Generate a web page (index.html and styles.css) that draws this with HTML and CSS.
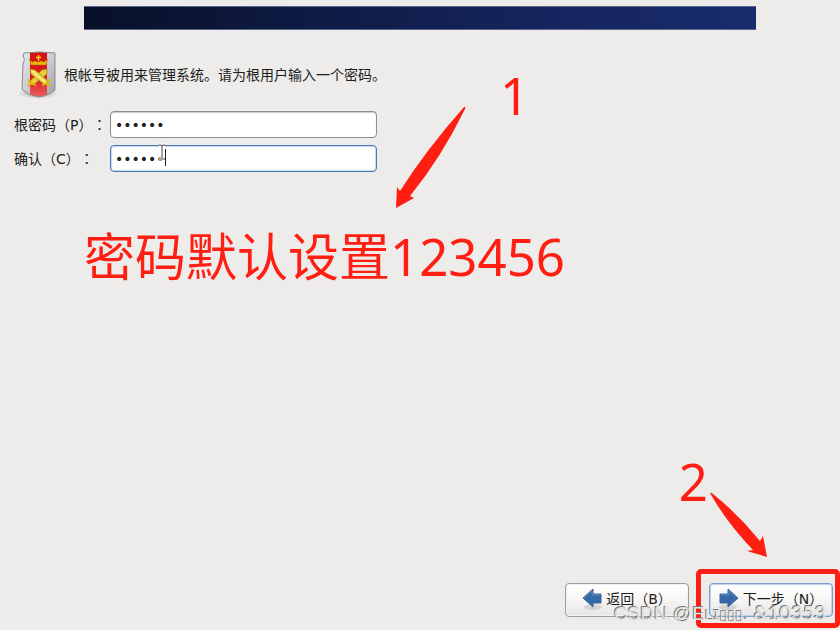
FILE: index.html
```html
<!DOCTYPE html>
<html lang="zh-CN">
<head>
<meta charset="utf-8">
<meta name="viewport" content="width=device-width, initial-scale=1">
<title>根密码</title>
<link rel="stylesheet" href="styles.css">
</head>
<body>
<div class="banner"></div>
<form class="installer">
  <main class="content">
    <header class="intro">
      <svg class="shield" viewBox="0 0 40 50" aria-hidden="true">
        <defs>
          <linearGradient id="steel" x1="0" x2="1" y1="0" y2="1">
            <stop offset="0" stop-color="#ececee"/><stop offset=".5" stop-color="#ccc9d0"/><stop offset="1" stop-color="#9a969f"/>
          </linearGradient>
          <linearGradient id="red" x1="0" x2="0" y1="0" y2="1">
            <stop offset="0" stop-color="#d40f10"/><stop offset=".55" stop-color="#e01a1c"/><stop offset="1" stop-color="#ee6a6a"/>
          </linearGradient>
          <radialGradient id="shade"><stop offset="0" stop-color="#777" stop-opacity=".7"/><stop offset="1" stop-color="#777" stop-opacity="0"/></radialGradient>
          <clipPath id="shape"><path d="M5 3Q19 1 36 3V40Q31 45 20 47Q8 45 3 39L4 14Q7 9 4 6Z"/></clipPath>
        </defs>
        <ellipse cx="19" cy="43" rx="20" ry="6" fill="url(#shade)"/>
        <g clip-path="url(#shape)">
          <path fill="url(#steel)" d="M0 0H40V50H0Z"/>
          <path fill="url(#red)" d="M11 0H28V50H11Z"/>
        </g>
        <path d="M5 3Q19 1 36 3V40Q31 45 20 47Q8 45 3 39L4 14Q7 9 4 6Z" fill="none" stroke="#8b8890"/>
        <path d="M10 9L13 12L16 11L19 12L22 11L25 12L29 9L27 15H12Z" fill="#e9b90c" stroke="#a8650a" stroke-width=".5"/>
        <path d="M19.500 5V11M17 7.500H22" stroke="#ffd91c" stroke-width="1.300"/>
        <path d="M28 19L23 20L11 31L14 35L28 24Z" fill="#e8cf35" stroke="#a97f08" stroke-width=".7"/>
        <path d="M11 19L16 20L29 31L26 35L12 24Z" fill="#f0dc4e" stroke="#a97f08" stroke-width=".7"/>
        <path d="M13 21L27 33" stroke="#fff5b8" stroke-width="1"/>
        <path d="M9 29Q11 34 17 35M31 29Q29 34 23 35M13 32L9 36M27 32L31 36" fill="none" stroke="#dfb60a" stroke-width="2"/>
      </svg>
      <p>根帐号被用来管理系统。请为根用户输入一个密码。</p>
    </header>
    <div class="fields">
      <label for="password">根密码（P）<span class="colon" lang="zh-Hant">：</span></label>
      <input id="password" type="password" value="123456">
      <label for="confirm">确认（C）<span class="colon" lang="zh-Hant">：</span></label>
      <div class="focused">
        <input id="confirm" type="password" value="123456">
        <svg class="cursor" viewBox="0 0 12 24" aria-hidden="true">
          <path d="M1 2H3L4 3L5 2H7M4 3V15M1 16H7" fill="none" stroke="#fff" stroke-width="3"/>
          <path d="M1 2H3L4 3L5 2H7M4 3V15M1 16H7" fill="none" stroke="#444"/>
          <path d="M7.500 6V23" stroke="#222"/>
        </svg>
      </div>
    </div>
    <p class="note note-password">密码默认设置123456</p>
    <p class="note note-one">1</p>
    <svg class="arrow-one" viewBox="0 0 72 106" aria-hidden="true"><path fill="#ff1e12" d="M69 2Q71 1 70 4Q46 53 15 91L19 93L1 103L2 82L5 86Q31 45 69 2Z"/></svg>
  </main>
  <footer class="actions">
    <button type="button">
      <svg class="arrow" viewBox="0 0 20 22" aria-hidden="true"><ellipse cx="11" cy="19" rx="9" ry="3" fill="#888" opacity=".25"/><path d="M1 10L11 1V6H19V15H11V19Z" fill="#3568a8" stroke="#3c659b"/><path d="M2 10L10 3V7H18" fill="none" stroke="#5f8cc4"/></svg>
      <span>返回（B）</span>
    </button>
    <div class="next">
      <button type="submit" class="primary">
        <svg class="arrow" viewBox="0 0 20 22" aria-hidden="true"><ellipse cx="9" cy="19" rx="9" ry="3" fill="#888" opacity=".25"/><path d="M19 10L9 1V6H1V15H9V19Z" fill="#3568a8" stroke="#3c659b"/><path d="M18 10L10 3V7H2" fill="none" stroke="#5f8cc4"/></svg>
        <span>下一步（N）</span>
      </button>
      <span class="frame"></span>
      <span class="note note-two">2</span>
      <svg class="arrow-two" viewBox="0 0 60 68" aria-hidden="true"><path fill="#ff1e12" d="M1 2Q2 1 4 3Q30 24 51 50L54 45L58 66L38 60L44 59Q18 32 1 2Z"/></svg>
    </div>
    <span class="watermark">CSDN @E<small>L</small>ɪ<span class="boxes">▯▯▯</span>. <span class="digits">&amp;10353</span></span>
  </footer>
</form>
</body>
</html>
```
FILE: styles.css
```css
* {
  box-sizing: border-box;
}

body {
  display: flex;
  flex-direction: column;
  min-height: 100vh;
  margin: 0;
  background: #edecea;
  color: #1c1c1c;
  font: 14px/20px "DejaVu Sans", "Noto Sans CJK SC", sans-serif;
}

p {
  margin: 0;
}

.banner {
  height: 24px;
  margin: 6px 10% 0;
  border: solid #5b668c;
  border-width: 1px 0;
  background: linear-gradient(90deg, #081027, #0e1b45 35%, #16255f 70%, #182b6c);
}

.installer {
  position: relative;
  display: flex;
  flex: 1;
  flex-direction: column;
}

.content {
  position: relative;
  flex: 1;
  padding: 20px 14px;
}

.intro {
  display: flex;
  align-items: center;
  gap: 5px;
  padding-left: 5px;
}

.shield {
  width: 40px;
  height: 50px;
}

.fields {
  display: grid;
  grid-template-columns: 96px minmax(0, 267px);
  align-items: center;
  row-gap: 7px;
  margin-top: 11px;
}

.fields label {
  white-space: nowrap;
  text-spacing-trim: space-all;
}

.colon {
  font-family: "Noto Sans CJK TC", sans-serif;
}

.fields input {
  display: block;
  width: 100%;
  height: 27px;
  padding: 0 4px;
  border: 1px solid #8f8d89;
  border-radius: 4px;
  outline: 0;
  background: #fff;
  box-shadow: inset 0 1px 1px #c9c8c5;
  color: #222;
  font: 14px/20px "DejaVu Sans", sans-serif;
}

.focused {
  position: relative;
}

.focused input {
  border-color: #4678b4;
  box-shadow: inset 0 0 1px 1px #c5d7ec;
}

.cursor {
  position: absolute;
  top: -2px;
  left: 48px;
  width: 12px;
  height: 24px;
}

.note {
  position: absolute;
  color: #ff1e12;
  font: 51px/60px "Noto Sans", "Noto Sans CJK SC", sans-serif;
  white-space: nowrap;
}

.note-password {
  top: 196px;
  left: 84px;
}

.note-one {
  top: 35px;
  left: 500px;
}

.arrow-one {
  position: absolute;
  top: 75px;
  left: 395px;
  width: 72px;
  height: 106px;
}

.actions {
  position: relative;
  display: flex;
  justify-content: flex-end;
  gap: 20px;
  padding: 0 7px 13px;
}

.actions button {
  display: flex;
  align-items: center;
  justify-content: center;
  gap: 4px;
  width: 124px;
  height: 34px;
  padding: 0 0 2px;
  border: 1px solid #a09e9b;
  border-radius: 4px;
  background: linear-gradient(#fff, #f7f6f5 50%, #e6e5e3);
  box-shadow: inset 0 0 0 1px #f3f2f1;
  color: inherit;
  font: inherit;
  white-space: nowrap;
}

.actions .primary {
  border-color: #7c9fcd;
  box-shadow: inset 0 0 0 1px #c3d4ea;
}

.arrow {
  width: 20px;
  height: 22px;
}

.next {
  position: relative;
}

.frame {
  position: absolute;
  inset: -14px -7px -11px -13px;
  border: 5px solid #ff1e12;
  border-radius: 5px;
}

.note-two {
  right: 125px;
  bottom: 106px;
}

.arrow-two {
  position: absolute;
  right: 64px;
  bottom: 58px;
  width: 60px;
  height: 68px;
}

.watermark {
  position: absolute;
  right: 14px;
  bottom: 3px;
  color: #e3e2e0;
  font: 19px/24px "Liberation Sans", "DejaVu Sans", sans-serif;
  text-shadow: -1px -1px 0 #777;
  white-space: nowrap;
}

.watermark small {
  font-size: 15px;
}

.boxes {
  font: 14px/24px "DejaVu Sans", sans-serif;
}

.digits {
  font: 20px/24px Lato, sans-serif;
}
```
